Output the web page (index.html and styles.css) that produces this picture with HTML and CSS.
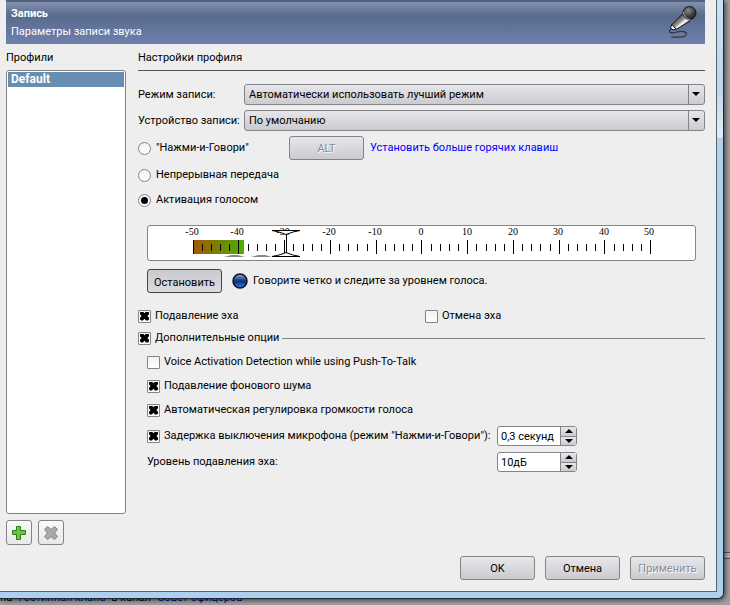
FILE: index.html
```html
<!DOCTYPE html>
<html lang="ru">
<head>
  <meta charset="UTF-8" />
  <title>Запись</title>
  <link rel="stylesheet" href="styles.css">
</head>
<body>
  <div class="window">
    <form class="dialog">
      <header class="banner">
        <div>
          <h1>Запись</h1>
          <p>Параметры записи звука</p>
        </div>
        <svg class="mic" width="32" height="34" viewBox="0 0 32 34">
          <defs>
            <linearGradient id="micBody" x1="0" y1="0" x2="1" y2="1">
              <stop offset="0.2" stop-color="#333" />
              <stop offset="0.5" stop-color="#999" />
              <stop offset="0.6" stop-color="#fff" />
              <stop offset="0.8" stop-color="#222" />
            </linearGradient>
            <radialGradient id="micHead" cx="0.4" cy="0.3" r="0.6">
              <stop offset="0" stop-color="#888" />
              <stop offset="1" stop-color="#292929" />
            </radialGradient>
          </defs>
          <path d="M5 24 C0 28 3 30 10 28 C17 26 22 29 18 32 C15 34 8 33 4 33" fill="none" stroke="#333" stroke-width="1.2" />
          <path d="M15.500 10 L23 17 L9 25.500 L4.500 21 Z" fill="url(#micBody)" stroke="#151515" />
          <path d="M5 20.500 L9 25 L6 26 L3.500 23.500 Z" fill="#eee" stroke="#111" />
          <circle cx="22.500" cy="9" r="6.500" fill="url(#micHead)" stroke="#151515" />
          <path d="M16.500 8 Q17 14.500 23.500 16" fill="none" stroke="#aaa" />
        </svg>
      </header>

      <div class="columns">
        <section class="profiles">
          <label class="caption" for="profiles">Профили</label>
          <select id="profiles" class="profile-list" size="5">
            <option selected>Default</option>
          </select>
          <div class="profile-buttons">
            <button type="button" class="icon-btn" aria-label="Добавить">
              <svg width="14" height="14" viewBox="0 0 14 14">
                <path d="M4.500 0.500h4v4h5v4h-5v5h-4v-5h-4v-4h4z" fill="#6cc63c" stroke="#2f7a1c" />
              </svg>
            </button>
            <button type="button" class="icon-btn" aria-label="Удалить">
              <svg width="14" height="14" viewBox="0 0 14 14">
                <path d="M3.500 0.500L7 3.500L10.500 0.500L13.500 3.500L10.500 7L13.500 10.500L10.500 13.500L7 10.500L3.500 13.500L0.500 10.500L3.500 7L0.500 3.500Z" fill="#aaa" stroke="#808080" stroke-linejoin="round" />
              </svg>
            </button>
          </div>
        </section>

        <section class="settings">
          <h2 class="caption">Настройки профиля</h2>

          <div class="device-grid">
            <label for="mode">Режим записи:</label>
            <div class="combo">
              <select id="mode"><option>Автоматически использовать лучший режим</option></select>
            </div>
            <label for="device">Устройство записи:</label>
            <div class="combo">
              <select id="device"><option>По умолчанию</option></select>
            </div>
          </div>

          <div class="row ptt">
            <label class="check"><input type="radio" name="activation">"Нажми-и-Говори"</label>
            <button type="button" class="btn" disabled>ALT</button>
            <a href="#hotkeys">Установить больше горячих клавиш</a>
          </div>
          <div class="row mode"><label class="check"><input type="radio" name="activation">Непрерывная передача</label></div>
          <div class="row mode"><label class="check"><input type="radio" name="activation" checked>Активация голосом</label></div>

          <div class="voice">
            <div class="meter">
              <svg width="547" height="34" viewBox="0 0 547 34">
                <defs>
                  <linearGradient id="level">
                    <stop offset="0" stop-color="#aa5500" />
                    <stop offset="1" stop-color="#48b000" />
                  </linearGradient>
                </defs>
                <rect x="45" y="14" width="51" height="14" fill="url(#level)" />
                <path class="major" d="M45.500 14v14M90.500 14v14M136.500 14v14M182.500 14v14M228.500 14v14M273.500 14v14M319.500 14v14M365.500 14v14M411.500 14v14M456.500 14v14M502.500 14v14" />
                <path class="minor" d="M54.500 18v7M63.500 18v7M72.500 18v7M81.500 18v7M100.500 18v7M109.500 18v7M118.500 18v7M127.500 18v7M145.500 18v7M155.500 18v7M164.500 18v7M173.500 18v7M191.500 18v7M200.500 18v7M209.500 18v7M219.500 18v7M237.500 18v7M246.500 18v7M255.500 18v7M264.500 18v7M283.500 18v7M292.500 18v7M301.500 18v7M310.500 18v7M328.500 18v7M338.500 18v7M347.500 18v7M356.500 18v7M374.500 18v7M383.500 18v7M392.500 18v7M402.500 18v7M420.500 18v7M429.500 18v7M438.500 18v7M447.500 18v7M466.500 18v7M475.500 18v7M484.500 18v7M493.500 18v7" />
                <g class="numbers">
                  <text x="44" y="9">-50</text>
                  <text x="89" y="9">-40</text>
                  <text x="135" y="9">-30</text>
                  <text x="181" y="9">-20</text>
                  <text x="227" y="9">-10</text>
                  <text x="273" y="9">0</text>
                  <text x="319" y="9">10</text>
                  <text x="365" y="9">20</text>
                  <text x="410" y="9">30</text>
                  <text x="456" y="9">40</text>
                  <text x="501" y="9">50</text>
                </g>
                <path d="M76 31h21l-7 -2h-7zM103 31h21l-7 -2h-7z" fill="#888" />
                <path d="M124 4.500h28q-7 1 -14 4q-7 -3 -14 -4zM124 30.500h28q-7 -1 -14 -4q-7 3 -14 4z" fill="#fff" stroke="#000" />
                <path d="M138.500 8v19" stroke="#000" />
              </svg>
            </div>
            <div class="voice-test">
              <button type="button" class="btn pressed">Остановить</button>
              <svg class="led" width="16" height="16" viewBox="0 0 16 16">
                <defs>
                  <linearGradient id="ledFill" x1="0" y1="0" x2="0" y2="1">
                    <stop offset="0" stop-color="#8fabd6" />
                    <stop offset="0.45" stop-color="#1b3f86" />
                    <stop offset="0.55" stop-color="#0c3078" />
                    <stop offset="1" stop-color="#2f8af0" />
                  </linearGradient>
                </defs>
                <circle cx="8" cy="8" r="7" fill="url(#ledFill)" stroke="#10131c" stroke-width="1.500" />
              </svg>
              <span>Говорите четко и следите за уровнем голоса.</span>
            </div>
          </div>

          <div class="row echo">
            <label class="check"><input type="checkbox" checked>Подавление эха</label>
            <label class="check"><input type="checkbox">Отмена эха</label>
          </div>

          <fieldset class="advanced">
            <legend><label class="check"><input type="checkbox" checked>Дополнительные опции</label></legend>
            <div class="row"><label class="check"><input type="checkbox">Voice Activation Detection while using Push-To-Talk</label></div>
            <div class="row"><label class="check"><input type="checkbox" checked>Подавление фонового шума</label></div>
            <div class="row"><label class="check"><input type="checkbox" checked>Автоматическая регулировка громкости голоса</label></div>
            <div class="row spin-row">
              <label class="check"><input type="checkbox" checked>Задержка выключения микрофона (режим "Нажми-и-Говори"):</label>
              <div class="spin">
                <input type="text" value="0,3 секунд" aria-label="Задержка">
                <div class="spin-buttons">
                  <button type="button" class="up" aria-label="Больше"></button>
                  <button type="button" class="down" aria-label="Меньше"></button>
                </div>
              </div>
            </div>
            <div class="row spin-row">
              <label for="echo-level">Уровень подавления эха:</label>
              <div class="spin">
                <input type="text" id="echo-level" value="10дБ">
                <div class="spin-buttons">
                  <button type="button" class="up" aria-label="Больше"></button>
                  <button type="button" class="down" aria-label="Меньше"></button>
                </div>
              </div>
            </div>
          </fieldset>
        </section>
      </div>

      <footer class="actions">
        <button type="button" class="btn">OK</button>
        <button type="button" class="btn">Отмена</button>
        <button type="button" class="btn" disabled>Применить</button>
      </footer>
    </form>
  </div>
  <p class="log">на <span>"Гостинная клана"</span> в канал <span>"Совет офицеров"</span></p>
</body>
</html>
```
FILE: styles.css
```css
* {
    box-sizing: border-box;
}

body {
    margin: 0;
    font-family: Roboto, sans-serif;
    font-size: 11px;
    line-height: 16px;
    color: #000;
    background: linear-gradient(#555 1px, #b0b0b0 1px, #b0b0b0 6px, #555 6px) 0 calc(100vh - 53px) / 100% 7px no-repeat #a0a0a0;
}

h1, h2, p {
    margin: 0;
    font-size: 11px;
}

button, input, select {
    font: inherit;
    color: inherit;
    margin: 0;
}

label {
    white-space: nowrap;
}

/* window frame */

.window {
    position: relative;
    z-index: 1;
    display: flex;
    min-height: calc(100vh - 6px);
    margin-right: 6px;
    padding: 0 6px 6px 0;
    background: linear-gradient(#c9e1f6, #bfd6ea 90px, #e2f0fb 137px, #b4d0ea 138px, #acd0ee);
    border-right: 1px solid #1c2a36;
    border-bottom: 1px solid #1c2a36;
    border-bottom-right-radius: 6px;
    box-shadow: 1px 1px 5px rgba(0,0,0,0.7);
}

.dialog {
    flex: 1;
    display: flex;
    flex-direction: column;
    padding: 0 11px 11px 6px;
    background-color: #eee;
    border-right: 1px solid #54646f;
    border-bottom: 1px solid #54646f;
}

.banner {
    display: flex;
    justify-content: space-between;
    height: 44px;
    padding: 4px 6px 0 5px;
    color: #fff;
    background: linear-gradient(#8190ae, #586b8c 14px, #7080ae);
    border-top: 2px solid #53617e;
}

.banner p {
    margin-top: 2px;
}

.mic {
    margin-top: -2px;
}

.columns {
    flex: 1;
    display: flex;
    gap: 12px;
}

.caption {
    height: 26px;
    padding-top: 1px;
    line-height: 26px;
    font-weight: normal;
}

/* profiles */

.profiles {
    display: flex;
    flex-direction: column;
    width: 120px;
}

.profile-list {
    flex: 1;
    padding: 1px;
    background-color: #fff;
    border: 1px solid #848488;
    border-radius: 3px;
    outline: none;
    overflow: hidden;
}

.profile-list option {
    height: 15px;
    min-height: 15px;
    padding: 0 3px;
    line-height: 16px;
    font-size: 12px;
    font-weight: bold;
    color: #fff;
    background: linear-gradient(#688db2, #688db2);
}

.profile-buttons {
    display: flex;
    gap: 6px;
    margin-top: 6px;
}

.icon-btn {
    display: flex;
    align-items: center;
    justify-content: center;
    width: 26px;
    height: 25px;
    padding: 0;
    background: linear-gradient(#fafafa, #e8e8e8);
    border: 1px solid #848488;
    border-radius: 3px;
}

/* settings */

.settings {
    flex: 1;
}

h2.caption {
    height: 27px;
    border-bottom: 1px solid #555;
}

.device-grid {
    display: grid;
    grid-template-columns: 101px 1fr;
    gap: 5px;
    align-items: center;
    margin-top: 13px;
}

.combo {
    position: relative;
}

.combo select {
    appearance: none;
    display: block;
    width: 100%;
    height: 21px;
    padding: 0 20px 0 4px;
    background: linear-gradient(#e6e6eb, #cacacf);
    border: 1px solid #848488;
    border-radius: 3px;
}

.combo::before {
    content: "";
    position: absolute;
    top: 1px;
    bottom: 1px;
    right: 16px;
    border-left: 1px solid #848488;
}

.combo::after {
    content: "";
    position: absolute;
    top: 8px;
    right: 5px;
    border: 4px solid transparent;
    border-top-color: #000;
    border-bottom: 0;
}

.row {
    display: flex;
    align-items: center;
    height: 20px;
    margin-top: 4px;
}

.row.mode {
    margin-top: 5px;
}

.check {
    display: flex;
    align-items: center;
    gap: 4px;
}

.check input {
    appearance: none;
    display: flex;
    align-items: center;
    justify-content: center;
    width: 13px;
    height: 13px;
    background: linear-gradient(#f2f2f2, #fff);
    border: 1px solid #848488;
    border-radius: 1px;
}

.check input[type="radio"] {
    margin-right: 1px;
    border-radius: 50%;
}

.check input[type="radio"]:checked::before {
    content: "";
    width: 7px;
    height: 7px;
    border-radius: 50%;
    background-color: #000;
}

.check input[type="checkbox"]:checked::before {
    content: "";
    width: 9px;
    height: 9px;
    background-color: #000;
    clip-path: polygon(0 12%, 12% 0, 32% 0, 50% 20%, 68% 0, 88% 0, 100% 12%, 100% 30%, 82% 50%, 100% 70%, 100% 88%, 88% 100%, 68% 100%, 50% 80%, 32% 100%, 12% 100%, 0 88%, 0 70%, 18% 50%, 0 30%, 0 12%);
}

.btn {
    width: 75px;
    height: 24px;
    padding: 2px 0 0;
    background: linear-gradient(#e6e6eb, #cacacf);
    border: 1px solid #848488;
    border-radius: 3px;
}

.btn:disabled {
    color: #8c8c8c;
    text-shadow: 1px 1px #fff;
}

.btn.pressed {
    padding-top: 4px;
    background: linear-gradient(#cacace, #dcdce0);
    border-color: #444;
}

.ptt {
    height: 24px;
    margin-top: 5px;
}

.ptt .check {
    width: 151px;
}

.ptt a {
    margin-left: 6px;
    color: #00f;
    text-decoration: none;
}

.voice {
    margin: 15px 9px 13px;
}

.meter {
    height: 36px;
    background-color: #fff;
    border: 1px solid #848488;
    border-radius: 3px;
}

.meter svg {
    display: block;
}

.major, .minor {
    stroke: #000;
}

.numbers {
    font-family: "Liberation Serif", serif;
    font-size: 10px;
    text-anchor: middle;
}

.voice-test {
    display: flex;
    align-items: center;
    margin-top: 8px;
}

.led {
    margin: 0 5px 0 10px;
}

.echo .check:first-child {
    width: 287px;
}

.advanced {
    margin: 2px 0 0;
    padding: 0 0 0 9px;
    border: 0;
    border-top: 1px solid #848488;
}

.advanced legend {
    height: 20px;
    margin-left: -9px;
    padding: 2px 3px 0 0;
}

.spin-row {
    margin-top: 6px;
}

.spin-row > label {
    width: 350px;
}

.spin {
    display: flex;
    width: 80px;
    height: 20px;
    background-color: #fff;
    border: 1px solid #848488;
    border-radius: 3px;
}

.spin input {
    flex: 1;
    min-width: 0;
    padding: 2px 3px 0;
    background: none;
    border: 0;
}

.spin-buttons {
    display: flex;
    flex-direction: column;
    width: 16px;
    border-left: 1px solid #848488;
}

.spin-buttons button {
    flex: 1;
    display: flex;
    align-items: center;
    justify-content: center;
    padding: 0;
    background: linear-gradient(#e6e6eb, #cacacf);
    border: 0;
}

.spin-buttons .down {
    border-top: 1px solid #848488;
}

.spin-buttons button::before {
    content: "";
    border: 4px solid transparent;
}

.spin-buttons .up::before {
    border-top: 0;
    border-bottom-color: #000;
}

.spin-buttons .down::before {
    border-bottom: 0;
    border-top-color: #000;
}

.actions {
    display: flex;
    justify-content: flex-end;
    gap: 10px;
    margin-top: 11px;
}

/* chat line behind the window */

.log {
    height: 14px;
    margin-top: -8px;
    line-height: 14px;
    white-space: nowrap;
}

.log span {
    color: #0000a0;
}
```
